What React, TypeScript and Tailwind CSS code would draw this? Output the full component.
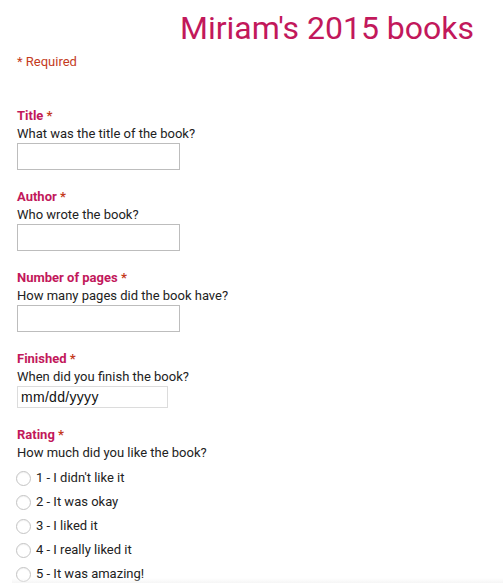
const font = { fontFamily: "Roboto, 'Liberation Sans', sans-serif" };

type Question = {
    label: string;
    help: string;
};

const textQuestions: Question[] = [
    { label: "Title", help: "What was the title of the book?" },
    { label: "Author", help: "Who wrote the book?" },
    { label: "Number of pages", help: "How many pages did the book have?" },
];

const ratings = [
    "1 - I didn't like it",
    "2 - It was okay",
    "3 - I liked it",
    "4 - I really liked it",
    "5 - It was amazing!",
];

function Label({ text }: { text: string }) {
    return (
        <div className="h-[18px] leading-[18px] text-[13px] font-bold text-[#c2185b]">
            {text} <span className="text-[#c43b1d]">*</span>
        </div>
    );
}

function Help({ text }: { text: string }) {
    return <div className="h-[18px] leading-[18px] text-[13px] text-[#222]">{text}</div>;
}

export default function App() {
    return (
        <div className="relative min-h-[583px] bg-white overflow-hidden" style={font}>
            <h1 className="h-[40px] mt-[8px] pr-[29px] text-right text-[32px] leading-[40px] font-normal text-[#c2185b]">
                Miriam's 2015 books
            </h1>

            <div className="px-[17px]">
                <div className="mt-[5px] h-[18px] leading-[18px] text-[13px] text-[#c43b1d]">* Required</div>

                <div className="mt-[36px] flex flex-col gap-[18px]">
                    {textQuestions.map((q) => (
                        <div key={q.label}>
                            <Label text={q.label} />
                            <Help text={q.help} />
                            <div className="w-[163px] h-[27px] border border-[#bdbdbd] bg-white" />
                        </div>
                    ))}

                    <div>
                        <Label text="Finished" />
                        <Help text="When did you finish the book?" />
                        <div
                            className="w-[151px] h-[22px] border border-[#dcdcdc] bg-white pl-[3px] flex items-center text-[14px] tracking-[0.3px] text-[#111]"
                            style={{ fontFamily: "'Liberation Sans', Arial, sans-serif" }}
                        >
                            mm/dd/yyyy
                        </div>
                    </div>

                    <div>
                        <Label text="Rating" />
                        <Help text="How much did you like the book?" />
                        <div className="mt-[4px] flex flex-col">
                            {ratings.map((r) => (
                                <label key={r} className="h-[24px] flex items-center gap-[5px] text-[13px] text-[#222]">
                                    <span className="w-[15px] h-[15px] -ml-[1px] rounded-full border border-[#c4c4c4] bg-white shadow-[inset_0_1px_1px_rgba(0,0,0,0.05)]" />
                                    {r}
                                </label>
                            ))}
                        </div>
                    </div>
                </div>
            </div>

            <div className="absolute left-[12px] right-0 bottom-0 h-[8px] bg-gradient-to-b from-white/0 to-[#f0f0f0]" />
        </div>
    );
}
